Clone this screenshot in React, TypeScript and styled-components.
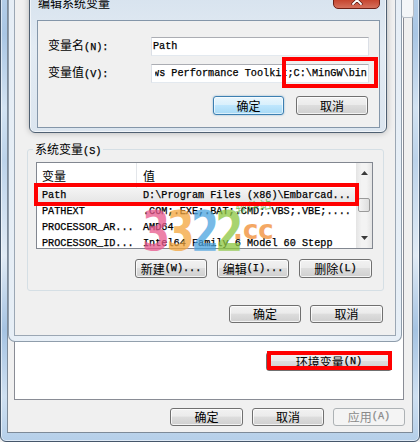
import React from "react";
import styled, { createGlobalStyle, css } from "styled-components";

const CJK = `"Noto Sans CJK SC", "Noto Sans", sans-serif`;
const MONO = `"Liberation Mono", "DejaVu Sans Mono", monospace`;

const GlobalStyle = createGlobalStyle`
  *, *::before, *::after { box-sizing: border-box; }
  html, body { margin: 0; padding: 0; width: 420px; height: 442px; overflow: hidden; background: #f0f0f0; }
  #root { width: 420px; height: 442px; }
`;

const Desktop = styled.div`
  position: relative;
  width: 420px;
  height: 442px;
  overflow: hidden;
  font-family: ${CJK};
  font-size: 12px;
  line-height: 16px;
  color: #000;
`;

const monoText = css`
  font-family: ${MONO};
  font-size: 10.2px;
  -webkit-text-stroke: 0.25px currentColor;
`;

const Latin = styled.span`
  ${monoText}
`;

/* ---------- Win7 push button ---------- */
const Btn = styled.div<{ $w: number; $h?: number; $variant?: "default" | "normal" | "disabled" }>`
  width: ${(p) => p.$w}px;
  height: ${(p) => p.$h ?? 19}px;
  flex-shrink: 0;
  display: flex;
  align-items: center;
  justify-content: center;
  white-space: nowrap;
  border: 1px solid #707070;
  border-radius: 3px;
  background: linear-gradient(#f2f2f2 0%, #ebebeb 45%, #dddddd 50%, #cfcfcf 100%);
  box-shadow: inset 0 0 0 1px rgba(255, 255, 255, 0.75);
  ${(p) =>
    p.$variant === "default" &&
    css`
      border-color: #3c7fb1;
      background: linear-gradient(#eaf6fd 0%, #d9f0fc 45%, #bee6fd 50%, #a7d9f5 100%);
      box-shadow: inset 0 0 0 1px rgba(255, 255, 255, 0.6), 0 0 2px rgba(60, 127, 177, 0.6);
    `}
  ${(p) =>
    p.$variant === "disabled" &&
    css`
      border-color: #adb2b5;
      background: #f4f4f4;
      color: #8a8a8a;
      box-shadow: none;
    `}
`;

const ButtonRow = styled.div<{ $gap: number; $top?: number; $right?: number }>`
  display: flex;
  justify-content: flex-end;
  gap: ${(p) => p.$gap}px;
  margin-top: ${(p) => p.$top ?? 0}px;
  padding-right: ${(p) => p.$right ?? 0}px;
`;

/* ---------- 系统属性 (background window) ---------- */
const SysWindow = styled.div`
  position: absolute;
  left: 0;
  top: -300px;
  width: 420px;
  height: 742px;
  display: flex;
  flex-direction: column;
  padding: 0 6px 8px 6px;
  border: 1px solid #45566a;
  border-radius: 0 0 6px 6px;
  background: linear-gradient(
    180deg,
    #b3cde8 0%,
    #c9dcef 30%,
    #a9c6e4 45%,
    #d3e3f2 55%,
    #bcd3ea 62%,
    #e1ebf5 75%,
    #a5c3e2 85%,
    #cfe0f1 94%,
    #b5cfe9 100%
  );
  box-shadow: inset 0 0 0 1px rgba(255, 255, 255, 0.55);
`;

const SysClient = styled.div`
  flex: 1;
  display: flex;
  flex-direction: column;
  justify-content: flex-end;
  background: #f0f0f0;
  border: 1px solid #7d8a98;
  padding: 0 7px 6px 6px;
`;

const TabPage = styled.div`
  flex: 1;
  display: flex;
  flex-direction: column;
  justify-content: flex-end;
  align-items: flex-end;
  background: #fff;
  border: 1px solid #898c95;
  margin: 0 1px 8px 0;
  padding: 0 11px 28px 0;
`;

/* top-right fragment of the background window's tab strip */
const TabCorner = styled.div`
  position: absolute;
  left: 401px;
  top: -6px;
  width: 13px;
  height: 24px;
  border: 1px solid #b7bec7;
  border-radius: 3px;
  background: #f4f6f8;
`;

/* ---------- 环境变量 window ---------- */
const EnvWindow = styled.div`
  position: absolute;
  left: 8px;
  top: -300px;
  width: 394px;
  height: 642px;
  display: flex;
  flex-direction: column;
  padding: 0 5px 5px 5px;
  border: 1px solid rgba(70, 90, 110, 0.55);
  border-radius: 0 0 7px 7px;
  background: linear-gradient(90deg, #e6eef6 0%, #f6f9fc 50%, #e6eef6 100%);
`;

const EnvClient = styled.div`
  flex: 1;
  display: flex;
  flex-direction: column;
  justify-content: flex-end;
  background: #f0f0f0;
  border: 1px solid #9ba7b4;
  padding: 0 11px 12px 12px;
`;

const GroupBox = styled.fieldset`
  margin: 0;
  min-inline-size: 0;
  border: 1px solid #d5dfe5;
  border-radius: 3px;
  padding: 5px 10px 12px 8px;
`;

const Legend = styled.legend`
  padding: 0 2px;
  margin-left: -3px;
  line-height: 16px;
  height: 16px;
`;

const ListView = styled.div`
  height: 87px;
  display: flex;
  border: 1px solid #828790;
  background: #fff;
`;

const ListMain = styled.div`
  flex: 1;
  overflow: hidden;
  display: flex;
  flex-direction: column;
`;

const HeaderRow = styled.div`
  height: 25px;
  flex-shrink: 0;
  display: grid;
  grid-template-columns: 99px 1px 1fr;
  align-items: center;
`;

const HeaderCell = styled.div<{ $pad: number }>`
  padding-left: ${(p) => p.$pad}px;
`;

const HeaderDivider = styled.div`
  height: 100%;
  background: #e3e6ea;
`;

const Row = styled.div<{ $selected?: boolean }>`
  height: 16px;
  flex-shrink: 0;
  display: grid;
  grid-template-columns: 100px 1fr;
  align-items: center;
  ${monoText}
  white-space: nowrap;
  ${(p) =>
    p.$selected &&
    css`
      background: linear-gradient(#f4f4f4, #e4e4e4);
    `}
`;

const Cell = styled.div<{ $pad: number }>`
  padding-left: ${(p) => p.$pad}px;
  overflow: hidden;
`;

const ScrollBar = styled.div`
  width: 16px;
  flex-shrink: 0;
  display: flex;
  flex-direction: column;
  background: linear-gradient(90deg, #e4e4e4 0%, #f3f3f3 35%, #f3f3f3 65%, #e4e4e4 100%);
`;

const ArrowCell = styled.div`
  height: 20px;
  display: flex;
  align-items: center;
  justify-content: center;
`;

const Track = styled.div`
  flex: 1;
  display: flex;
  flex-direction: column;
  align-items: center;
  padding-top: 15px;
`;

const Thumb = styled.div`
  width: 12px;
  height: 14px;
  border: 1px solid #9a9a9a;
  border-radius: 2px;
  background: linear-gradient(90deg, #f4f4f4, #dedede);
`;

/* ---------- 编辑系统变量 dialog ---------- */
const EditDialog = styled.div`
  position: absolute;
  left: 29px;
  top: -11px;
  width: 358px;
  height: 144px;
  display: flex;
  flex-direction: column;
  padding: 0 6px 4px 7px;
  border: 1px solid #4f6072;
  border-radius: 6px;
  background: linear-gradient(180deg, #d6e2ee 0%, #e3ebf3 40%, #dbe5ef 100%);
  box-shadow: inset 0 0 0 1px rgba(255, 255, 255, 0.6), 0 0 6px rgba(0, 0, 0, 0.25);
`;

const TitleBar = styled.div`
  height: 30px;
  flex-shrink: 0;
  display: flex;
  align-items: flex-start;
`;

const TitleText = styled.div`
  margin-top: 5px;
  padding-left: 1px;
  font-size: 12px;
  line-height: 16px;
`;

const CloseButton = styled.div`
  margin-left: auto;
  margin-top: -1px;
  width: 47px;
  height: 20px;
  display: flex;
  justify-content: center;
  padding-top: 5px;
  border: 1px solid #6d2016;
  border-radius: 0 0 5px 5px;
  background: linear-gradient(#eab0a3 0%, #d98472 45%, #c6452f 55%, #d5705c 100%);
`;

const EditClient = styled.div`
  flex: 1;
  display: flex;
  flex-direction: column;
  background: #f0f0f0;
  border: 1px solid #8496a9;
  padding: 16px 10px 12px 10px;
`;

const FormGrid = styled.div`
  display: grid;
  grid-template-columns: 103px 1fr;
  row-gap: 8px;
  align-items: center;
`;

const FieldLabel = styled.div`
  white-space: nowrap;
`;

const TextBox = styled.div<{ $alignEnd?: boolean }>`
  height: 19px;
  display: flex;
  align-items: center;
  justify-content: ${(p) => (p.$alignEnd ? "flex-end" : "flex-start")};
  overflow: hidden;
  background: #fff;
  border: 1px solid #dbdfe6;
  border-top-color: #abadb3;
  border-bottom-color: #e3e9ef;
  padding: 0 1px 0 ${(p) => (p.$alignEnd ? 3 : 1)}px;
  ${monoText}
  white-space: nowrap;
`;

const TextClip = styled.div`
  display: flex;
  justify-content: flex-end;
  overflow: hidden;
  width: 100%;
`;

const TextValue = styled.span`
  flex-shrink: 0;
`;

/* ---------- overlays ---------- */
const Mark = styled.div<{ $x: number; $y: number; $w: number; $h: number }>`
  position: absolute;
  left: ${(p) => p.$x}px;
  top: ${(p) => p.$y}px;
  width: ${(p) => p.$w}px;
  height: ${(p) => p.$h}px;
  border: 4px solid #ff0000;
  pointer-events: none;
`;

const Watermark = styled.div`
  position: absolute;
  left: 140px;
  top: 196px;
  width: 150px;
  height: 72px;
  pointer-events: none;
`;

const WmDigits = styled.div`
  position: absolute;
  left: 2px;
  top: 4px;
  display: flex;
  font-family: "DejaVu Sans", sans-serif;
  font-weight: bold;
  font-size: 56px;
  line-height: 62px;
  letter-spacing: -5px;
  transform: scaleX(0.72);
  transform-origin: left top;
`;

const WmDigit = styled.span<{ $c: string }>`
  color: ${(p) => p.$c};
  opacity: 0.75;
`;

const WmCc = styled.div`
  position: absolute;
  left: 93px;
  top: 20px;
  font-family: "DejaVu Sans", sans-serif;
  font-weight: bold;
  font-size: 26px;
  line-height: 28px;
  color: #f39a4a;
  opacity: 0.85;
`;

const WmSite = styled.div`
  position: absolute;
  left: 95px;
  top: 3px;
  font-size: 12px;
  line-height: 14px;
  color: #5fb548;
  opacity: 0.8;
  transform: rotate(-8deg);
`;

const UpArrow = () => (
  <svg width="7" height="4" viewBox="0 0 7 4">
    <path d="M0 4 L3.5 0 L7 4 Z" fill="#3a3a3a" />
  </svg>
);
const DownArrow = () => (
  <svg width="7" height="4" viewBox="0 0 7 4">
    <path d="M0 0 L3.5 4 L7 0 Z" fill="#3a3a3a" />
  </svg>
);

const rows: { name: string; value: string; selected?: boolean }[] = [
  { name: "Path", value: "D:\\Program Files (x86)\\Embarcad...", selected: true },
  { name: "PATHEXT", value: ".COM;.EXE;.BAT;.CMD;.VBS;.VBE;...." },
  { name: "PROCESSOR_AR...", value: "AMD64" },
  { name: "PROCESSOR_ID...", value: "Intel64 Family 6 Model 60 Stepp" },
];

export default function App() {
  return (
    <>
      <GlobalStyle />
      <Desktop>
        <SysWindow>
          <SysClient>
            <TabPage>
              <Btn $w={126} $h={19}>
                环境变量<Latin>(N)</Latin>
              </Btn>
            </TabPage>
            <ButtonRow $gap={9}>
              <Btn $w={73} $h={18}>确定</Btn>
              <Btn $w={72} $h={18}>取消</Btn>
              <Btn $w={72} $h={18} $variant="disabled">
                应用<Latin>(A)</Latin>
              </Btn>
            </ButtonRow>
          </SysClient>
        </SysWindow>
        <TabCorner />

        <EnvWindow>
          <EnvClient>
            <GroupBox>
              <Legend>
                系统变量<Latin>(S)</Latin>
              </Legend>
              <ListView>
                <ListMain>
                  <HeaderRow>
                    <HeaderCell $pad={5}>变量</HeaderCell>
                    <HeaderDivider />
                    <HeaderCell $pad={6}>值</HeaderCell>
                  </HeaderRow>
                  {rows.map((r) => (
                    <Row key={r.name} $selected={r.selected}>
                      <Cell $pad={5}>{r.name}</Cell>
                      <Cell $pad={6}>{r.value}</Cell>
                    </Row>
                  ))}
                </ListMain>
                <ScrollBar>
                  <ArrowCell>
                    <UpArrow />
                  </ArrowCell>
                  <Track>
                    <Thumb />
                  </Track>
                  <ArrowCell>
                    <DownArrow />
                  </ArrowCell>
                </ScrollBar>
              </ListView>
              <ButtonRow $gap={10} $top={10} $right={1}>
                <Btn $w={72}>
                  新建<Latin>(W)...</Latin>
                </Btn>
                <Btn $w={72}>
                  编辑<Latin>(I)...</Latin>
                </Btn>
                <Btn $w={73}>
                  删除<Latin>(L)</Latin>
                </Btn>
              </ButtonRow>
            </GroupBox>
            <ButtonRow $gap={9} $top={14} $right={1}>
              <Btn $w={72} $h={18}>确定</Btn>
              <Btn $w={73} $h={18}>取消</Btn>
            </ButtonRow>
          </EnvClient>
        </EnvWindow>

        <EditDialog>
          <TitleBar>
            <TitleText>编辑系统变量</TitleText>
            <CloseButton>
              <svg width="12" height="10" viewBox="0 0 12 10">
                <path d="M2 1 L10 9 M10 1 L2 9" stroke="#5a1a12" strokeWidth="3.2" strokeLinecap="round" />
                <path d="M2 1 L10 9 M10 1 L2 9" stroke="#ffffff" strokeWidth="1.8" strokeLinecap="round" />
              </svg>
            </CloseButton>
          </TitleBar>
          <EditClient>
            <FormGrid>
              <FieldLabel>
                变量名<Latin>(N):</Latin>
              </FieldLabel>
              <TextBox>
                <TextValue>Path</TextValue>
              </TextBox>
              <FieldLabel>
                变量值<Latin>(V):</Latin>
              </FieldLabel>
              <TextBox $alignEnd>
                <TextClip>
                  <TextValue>C:\Program Files (x86)\Windows Kits\8.1\Windows Performance Toolkit;C:\MinGW\bin</TextValue>
                </TextClip>
              </TextBox>
            </FormGrid>
            <ButtonRow $gap={12} $top={13} $right={1}>
              <Btn $w={71} $variant="default">确定</Btn>
              <Btn $w={72}>取消</Btn>
            </ButtonRow>
          </EditClient>
        </EditDialog>

        <Watermark>
          <WmDigits>
            <WmDigit $c="#e8578c">3</WmDigit>
            <WmDigit $c="#f3a53c">3</WmDigit>
            <WmDigit $c="#4aa3df">2</WmDigit>
            <WmDigit $c="#8cc63f">2</WmDigit>
          </WmDigits>
          <WmSite>软件站</WmSite>
          <WmCc>.cc</WmCc>
        </Watermark>

        <Mark $x={282} $y={57} $w={96} $h={31} />
        <Mark $x={34} $y={183} $w={325} $h={23} />
        <Mark $x={267} $y={351} $w={125} $h={19} />
      </Desktop>
    </>
  );
}
